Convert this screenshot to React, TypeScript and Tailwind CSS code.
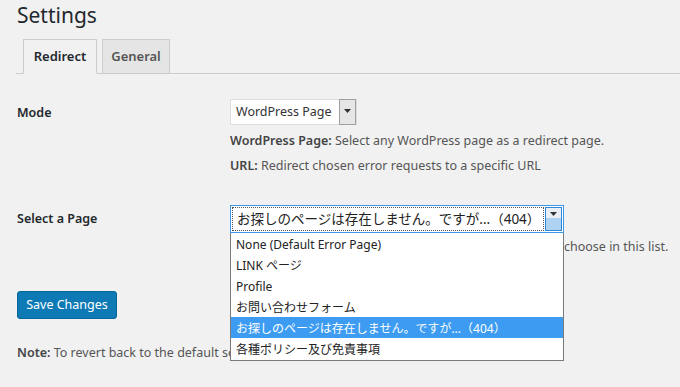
const pages = [
  "None (Default Error Page)",
  "LINK ページ",
  "Profile",
  "お問い合わせフォーム",
  "お探しのページは存在しません。ですが...（404）",
  "各種ポリシー及び免責事項",
];

const SELECTED = 4;

function Arrow({ className }: { className?: string }) {
  return (
    <svg width="7" height="4" viewBox="0 0 7 4" className={className}>
      <path d="M0 0h7L3.5 4z" fill="#333" />
    </svg>
  );
}

export default function App() {
  return (
    <div
      className="relative h-[387px] w-[680px] overflow-hidden bg-[#f1f1f1] text-[#444]"
      style={{ fontFamily: '"Noto Sans", "Noto Sans CJK JP", sans-serif' }}
    >
      <h1 className="pl-[17px] pt-[1px] text-[21px] font-normal leading-[29px] text-[#23282d]">
        Settings
      </h1>

      {/* tabs */}
      <div className="ml-[16px] mt-[9px] flex items-end gap-[5px] border-b border-[#ccc] pl-[7px]">
        <div className="-mb-px flex h-[35px] w-[74px] items-center justify-center border border-[#ccc] border-b-[#f1f1f1] bg-[#f1f1f1] text-[13px] font-semibold text-[#23282d]">
          Redirect
        </div>
        <div className="flex h-[34px] w-[68px] items-center justify-center border border-b-0 border-[#ccc] bg-[#e5e5e5] text-[13px] font-semibold text-[#555]">
          General
        </div>
      </div>

      {/* form */}
      <div className="pl-[17px] pt-[25px]">
        <div className="flex">
          <div className="w-[213px] pt-[4px] text-[12.5px] font-semibold leading-[20px] text-[#23282d]">
            Mode
          </div>
          <div className="text-[12.5px]">
            <div className="flex h-[26px] w-[127px] border border-[#ddd] bg-white">
              <div className="flex flex-1 items-center whitespace-nowrap pl-[5px] text-[12.5px] text-[#333]">
                WordPress Page
              </div>
              <div className="-my-px flex w-[17px] items-start justify-center border border-[#a0a0a0] bg-[#e6e6e6] pt-[9px]">
                <Arrow />
              </div>
            </div>
            <p className="mt-[6px] leading-[20px] text-[#555]">
              <span className="font-semibold text-[#444]">WordPress Page:</span> Select any WordPress page as a redirect page.
            </p>
            <p className="mt-[5px] leading-[20px] text-[#555]">
              <span className="font-semibold text-[#444]">URL:</span> Redirect chosen error requests to a specific URL
            </p>
          </div>
        </div>

        <div className="mt-[29px] flex">
          <div className="w-[213px] pt-[4px] text-[12.5px] font-semibold leading-[20px] text-[#23282d]">
            Select a Page
          </div>
          <div className="text-[12.5px]">
            <div className="flex h-[28px] w-[334px] border border-[#3d96e6] bg-white p-px">
              <div className="flex flex-1 items-center whitespace-nowrap border border-dotted border-[#555] pl-[4px] text-[13.5px] text-[#222]">
                {pages[SELECTED]}
              </div>
              <div className="ml-px flex w-[17px] flex-col border border-[#2c86d9]">
                <div className="flex h-[10px] items-center justify-center bg-[#e8eef4] pt-[2px]">
                  <Arrow />
                </div>
                <div className="flex-1 bg-[#aed2f2]" />
              </div>
            </div>
            <p className="mt-[4px] flex whitespace-nowrap leading-[20px] text-[#555]">
              <span className="w-[334px] overflow-hidden">Select the page that visitors are sent to. You can </span>
              <span>choose in this list.</span>
            </p>
          </div>
        </div>

        <button className="mt-[34px] h-[28px] w-[100px] rounded-[3px] border border-[#006799] bg-[#0e7ab5] text-[12.5px] text-white">
          Save Changes
        </button>

        <p className="mt-[24px] whitespace-nowrap text-[12.5px] leading-[20px] text-[#555]">
          <span className="font-semibold text-[#444]">Note:</span> To revert back to the default settings, choose None and save.
        </p>
      </div>

      {/* open dropdown list */}
      <ul className="absolute left-[230px] top-[233px] w-[334px] border border-t-0 border-[#7a7a7a] bg-white pb-[1px] text-[12px] text-[#222]">
        {pages.map((p, i) => (
          <li
            key={p}
            className={
              i === SELECTED
                ? "flex h-[21px] items-center bg-[#3d9cf2] pl-[5px] pt-[2px] text-white"
                : "flex h-[21px] items-center pl-[5px] pt-[2px]"
            }
          >
            {p}
          </li>
        ))}
      </ul>
    </div>
  );
}
